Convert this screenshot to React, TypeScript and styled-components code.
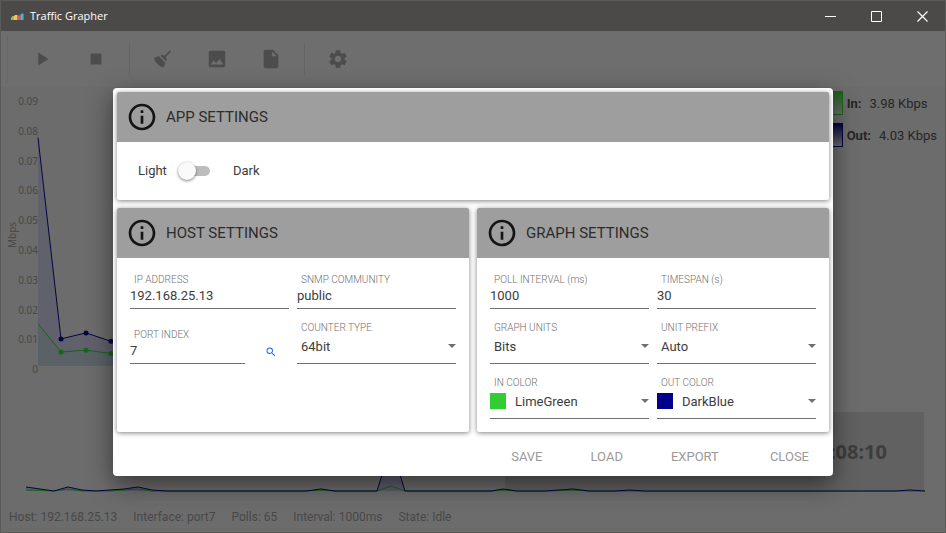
import React, { useState } from "react";
import styled, { createGlobalStyle } from "styled-components";
import { MdImage, MdInfoOutline, MdInsertDriveFile, MdPlayArrow, MdSearch, MdSettings, MdStop } from "react-icons/md";

const GlobalStyle = createGlobalStyle`
  *, *::before, *::after { box-sizing: border-box; }
  body { margin: 0; font-family: Roboto, sans-serif; font-size: 13px; color: #3c3c3c; }
  button, input, select { font: inherit; color: inherit; margin: 0; padding: 0; border: 0; border-radius: 0; background: none; }
`;

const systemFont = `"Noto Sans", sans-serif`;

const Window = styled.div`
  display: flex;
  flex-direction: column;
  min-height: 100vh;
  border: 1px solid #5a5a59;
  background: #6c6c6c;
`;

const TitleBar = styled.header`
  display: flex;
  align-items: center;
  height: 30px;
  padding-left: 9px;
  gap: 6px;
  background: #4c4a48;
  color: #fff;
`;

const Title = styled.h1`
  flex: 1;
  margin: 0;
  font: 400 11px/16px "Open Sans", sans-serif;
`;

const WindowControls = styled.div`
  display: flex;
  align-self: stretch;
`;

const WindowButton = styled.button`
  display: grid;
  place-items: center;
  width: 46px;
`;

const Content = styled.div`
  position: relative;
  flex: 1;
  display: flex;
  flex-direction: column;
`;

const Toolbar = styled.div`
  display: flex;
  align-items: center;
  height: 56px;
  padding-left: 6px;
  background: #6e6e6e;
`;

const Grip = styled.span`
  width: 8px;
  height: 46px;
  border-left: 1px dotted #626262;
`;

const ToolButton = styled.button`
  display: grid;
  place-items: center;
  width: 54px;
  height: 40px;
  color: #4c4c4c;
`;

const Divider = styled.span`
  width: 1px;
  height: 32px;
  margin: 0 6px;
  background: #646464;
`;

const Monitor = styled.main`
  flex: 1;
  display: flex;
`;

const TrafficChart = styled.svg`
  flex: 1;
  min-width: 0;
  height: 325px;
`;

const AxisText = styled.text`
  font: 400 10px ${systemFont};
  fill: #484848;
`;

const Legend = styled.ul`
  display: flex;
  flex-direction: column;
  gap: 8px;
  margin: 0;
  padding: 4px 8px 0 0;
  list-style: none;
  color: #262626;
`;

const LegendItem = styled.li`
  display: flex;
  align-items: center;
  height: 24px;
`;

const LegendSwatch = styled.span<{ $color: string }>`
  width: 24px;
  height: 24px;
  margin-right: 4px;
  border: 1px solid ${(p) => p.$color};
  background: linear-gradient(${(p) => p.$color}, #6c6c6c);
`;

const LegendValue = styled.span`
  margin-left: 8px;
`;

const OverviewChart = styled.svg`
  width: 100%;
  height: 92px;
`;

const ElapsedText = styled.text`
  font: 700 20px ${systemFont};
  fill: #3d3d3d;
`;

const StatusBar = styled.footer`
  display: flex;
  gap: 16px;
  padding: 5px 8px 7px;
  font-size: 12px;
  line-height: 16px;
  color: #484848;
`;

const Overlay = styled.div`
  position: absolute;
  inset: 0;
  display: grid;
  place-items: center;
`;

const Dialog = styled.form`
  width: min(720px, 100%);
  padding: 4px 4px 0;
  border-radius: 4px;
  background: #fff;
  box-shadow: 0 8px 24px rgba(0, 0, 0, 0.5);
`;

const Cards = styled.div`
  display: grid;
  grid-template-columns: 1fr 1fr;
  gap: 8px;
`;

const Card = styled.section<{ $wide?: boolean }>`
  grid-column: ${(p) => (p.$wide ? "1 / -1" : "auto")};
  border-radius: 2px;
  background: #fff;
  box-shadow: 0 1px 5px rgba(0, 0, 0, 0.5);
`;

const CardHeader = styled.h2`
  display: flex;
  align-items: center;
  gap: 8px;
  height: 50px;
  margin: 0;
  padding-left: 9px;
  border-radius: 2px 2px 0 0;
  background: #9e9e9e;
  color: #2c2c2c;
  font-size: 15px;
  font-weight: 400;

  svg { color: #141414; }
`;

const ThemeRow = styled.div`
  display: flex;
  align-items: center;
  height: 58px;
  padding-left: 21px;
`;

const Switch = styled.input`
  appearance: none;
  display: flex;
  align-items: center;
  width: 32px;
  height: 10px;
  margin: 0 23px 0 11px;
  border-radius: 5px;
  background: #bdbdbd;

  &::before {
    content: "";
    width: 18px;
    height: 18px;
    border-radius: 50%;
    background: #fafafa;
    box-shadow: 0 1px 3px rgba(0, 0, 0, 0.5);
  }
  &:checked { justify-content: flex-end; }
`;

const FieldGrid = styled.div`
  display: grid;
  grid-template-columns: 1fr 1fr;
  grid-template-rows: 51px 55px 55px;
  align-items: end;
  column-gap: 8px;
  padding: 0 13px 13px;
`;

const Field = styled.div`
  display: flex;
  flex-direction: column;
  flex: 1;
  min-width: 0;
`;

const FieldLabel = styled.label`
  padding-left: 4px;
  font-size: 10px;
  font-weight: 300;
  line-height: 12px;
  color: #707070;
`;

const TextInput = styled.input`
  width: 100%;
  height: 23px;
  padding-bottom: 2px;
  border-bottom: 1px solid #707070;
  outline: 0;
`;

const SelectBox = styled.div`
  display: flex;
  align-items: center;
  height: 30px;
  padding-bottom: 5px;
  border-bottom: 1px solid #707070;
`;

const ColorSwatch = styled.span<{ $color: string }>`
  width: 16px;
  height: 16px;
  margin-right: 5px;
  background: ${(p) => p.$color};
`;

const Select = styled.select`
  appearance: none;
  flex: 1;
  min-width: 0;
  height: 24px;
  padding: 2px 0 0 4px;
  outline: 0;
`;

const Arrow = styled.span`
  border: 4px solid transparent;
  border-top-color: #707070;
  border-bottom: 0;
  pointer-events: none;
`;

const PortRow = styled.div`
  display: flex;
  align-items: flex-end;
  gap: 8px;
`;

const SearchButton = styled.button`
  display: grid;
  place-items: center;
  width: 36px;
  height: 24px;
  color: #2962ff;
`;

const Actions = styled.div`
  display: flex;
  justify-content: flex-end;
  align-items: center;
  gap: 16px;
  height: 44px;
  padding: 6px 4px 0 0;
`;

const ActionButton = styled.button`
  height: 32px;
  padding: 0 16px;
  color: #9a9a9a;

  &:last-child { margin-left: 3px; }
`;

const IN = "#186418";
const OUT = "#050540";

type Point = [number, number];
const line = (points: Point[]) => points.map((p) => p.join(",")).join(" ");
const area = (points: Point[], base: number) =>
  line([[points[0][0], base], ...points, [points[points.length - 1][0], base]]);

const BASE = 279;
const PIXELS_PER_TICK = 30;
const ticks = ["0.09", "0.08", "0.07", "0.06", "0.05", "0.04", "0.03", "0.02", "0.01", "0"];
const plot = (values: number[]): Point[] => values.map((v, i) => [i === 0 ? 37 : 35 + i * 25, BASE - v * 2980]);
const outPoints = plot([0.0766, 0.0091, 0.0111, 0.0083, 0.009]);
const inPoints = plot([0.0142, 0.0047, 0.0053, 0.0042, 0.0045]);

const outOverview: Point[] = [
  [25, 75], [39, 77], [53, 79], [67, 75], [81, 78], [95, 79], [109, 78], [123, 77], [137, 75], [151, 78], [166, 79],
  [305, 79], [320, 77], [334, 79], [376, 79], [390, 34], [404, 79], [490, 79], [502, 77], [516, 79], [544, 79],
  [572, 77], [588, 79], [614, 79], [628, 78], [644, 79], [895, 79], [909, 78], [924, 79],
];
const inOverview: Point[] = [
  [25, 78], [53, 79], [67, 77], [81, 79], [109, 79], [137, 77], [151, 79], [305, 79], [320, 78], [334, 79],
  [376, 79], [390, 74], [404, 79], [490, 79], [502, 78], [516, 79], [544, 79], [572, 78], [588, 79], [924, 79],
];

function BroomIcon() {
  return (
    <svg width="22" height="22" viewBox="0 0 24 24" fill="currentColor">
      <path d="M19.36,2.72L20.78,4.14L15.06,9.85C16.13,11.39 16.28,13.24 15.38,14.44L9.06,8.12C10.26,7.22 12.11,7.37 13.65,8.44L19.36,2.72M5.93,17.57C3.92,15.56 2.69,13.16 2.35,10.92L7.23,8.83L14.67,16.27L12.58,21.15C10.34,20.81 7.94,19.58 5.93,17.57Z" />
    </svg>
  );
}

function AppLogo() {
  return (
    <svg width="14" height="14" viewBox="0 0 14 14">
      <path d="M1 11V8.500L2.500 7H4V11Z" fill="#8dbb6b" />
      <path d="M4 11V7L5 6H7.500V11Z" fill="#efc75e" />
      <path d="M7.500 11V6.500H10.500V11Z" fill="#e2574c" />
      <path d="M10.500 11V5.500L12 4.500H13.500V11Z" fill="#5fa8dc" />
    </svg>
  );
}

function TextField({ id, label, value }: { id: string; label: string; value: string }) {
  return (
    <Field>
      <FieldLabel htmlFor={id}>{label}</FieldLabel>
      <TextInput id={id} defaultValue={value} />
    </Field>
  );
}

function SelectField({ id, label, options, swatches }: { id: string; label: string; options: string[]; swatches?: boolean }) {
  const [value, setValue] = useState(options[0]);
  return (
    <Field>
      <FieldLabel htmlFor={id}>{label}</FieldLabel>
      <SelectBox>
        {swatches && <ColorSwatch $color={value.toLowerCase()} />}
        <Select id={id} value={value} onChange={(e) => setValue(e.target.value)}>
          {options.map((o) => (
            <option key={o}>{o}</option>
          ))}
        </Select>
        <Arrow />
      </SelectBox>
    </Field>
  );
}

function Chart() {
  return (
    <TrafficChart role="img" aria-label="Traffic in Mbps">
      {ticks.map((t, i) => (
        <AxisText key={t} x="37" y={18 + Math.round((i * PIXELS_PER_TICK * 149) / 150)} textAnchor="end">{t}</AxisText>
      ))}
      <AxisText transform="translate(15 148) rotate(-90)" textAnchor="middle">Mbps</AxisText>
      <polygon points={area(outPoints, BASE)} fill="#4c4c70" fillOpacity="0.35" />
      <polygon points={area(inPoints, BASE)} fill="#3f6b50" fillOpacity="0.2" />
      <polyline points={line(inPoints)} fill="none" stroke={IN} />
      <polyline points={line(outPoints)} fill="none" stroke={OUT} />
      {inPoints.slice(1).map(([x, y]) => <circle key={x} cx={x} cy={y} r="2.500" fill={IN} />)}
      {outPoints.slice(1).map(([x, y]) => <circle key={x} cx={x} cy={y} r="2.500" fill={OUT} />)}
    </TrafficChart>
  );
}

function Overview() {
  return (
    <OverviewChart role="img" aria-label="Traffic overview">
      <rect x="504" y="0" width="419" height="78" fill="#616161" />
      <ElapsedText x="886" y="47" textAnchor="end">00:08:10</ElapsedText>
      <polygon points={area(outOverview, 79)} fill="#4c4c70" fillOpacity="0.5" />
      <polyline points={line(inOverview)} fill="none" stroke={IN} />
      <polyline points={line(outOverview)} fill="none" stroke={OUT} />
    </OverviewChart>
  );
}

export default function App() {
  return (
    <>
      <GlobalStyle />
      <Window>
        <TitleBar>
          <AppLogo />
          <Title>Traffic Grapher</Title>
          <WindowControls>
            <WindowButton aria-label="Minimize">
              <svg width="11" height="11" stroke="#fff"><path d="M0 5.500H11" /></svg>
            </WindowButton>
            <WindowButton aria-label="Maximize">
              <svg width="11" height="11" stroke="#fff" fill="none"><path d="M0.500 0.500H10.500V10.500H0.500Z" /></svg>
            </WindowButton>
            <WindowButton aria-label="Close window">
              <svg width="11" height="11" stroke="#fff" strokeWidth="1.200"><path d="M0.500 0.500L10.500 10.500M10.500 0.500L0.500 10.500" /></svg>
            </WindowButton>
          </WindowControls>
        </TitleBar>
        <Content>
          <Toolbar>
            <Grip />
            <ToolButton aria-label="Start"><MdPlayArrow size={22} /></ToolButton>
            <ToolButton aria-label="Stop"><MdStop size={22} /></ToolButton>
            <Divider />
            <ToolButton aria-label="Clear"><BroomIcon /></ToolButton>
            <ToolButton aria-label="Save image"><MdImage size={22} /></ToolButton>
            <ToolButton aria-label="Save file"><MdInsertDriveFile size={22} /></ToolButton>
            <Divider />
            <ToolButton aria-label="Settings"><MdSettings size={22} /></ToolButton>
          </Toolbar>
          <Monitor>
            <Chart />
            <Legend>
              <LegendItem><LegendSwatch $color={IN} /><b>In:</b><LegendValue>3.98 Kbps</LegendValue></LegendItem>
              <LegendItem><LegendSwatch $color={OUT} /><b>Out:</b><LegendValue>4.03 Kbps</LegendValue></LegendItem>
            </Legend>
          </Monitor>
          <Overview />
          <StatusBar>
            <span>Host: 192.168.25.13</span>
            <span>Interface: port7</span>
            <span>Polls: 65</span>
            <span>Interval: 1000ms</span>
            <span>State: Idle</span>
          </StatusBar>
          <Overlay>
            <Dialog role="dialog" aria-label="Settings" onSubmit={(e) => e.preventDefault()}>
              <Cards>
                <Card $wide>
                  <CardHeader><MdInfoOutline size={32} />APP SETTINGS</CardHeader>
                  <ThemeRow>
                    <span>Light</span>
                    <Switch id="theme" type="checkbox" role="switch" aria-label="Dark theme" />
                    <label htmlFor="theme">Dark</label>
                  </ThemeRow>
                </Card>
                <Card>
                  <CardHeader><MdInfoOutline size={32} />HOST SETTINGS</CardHeader>
                  <FieldGrid>
                    <TextField id="ip" label="IP ADDRESS" value="192.168.25.13" />
                    <TextField id="community" label="SNMP COMMUNITY" value="public" />
                    <PortRow>
                      <TextField id="port" label="PORT INDEX" value="7" />
                      <SearchButton type="button" aria-label="Find port"><MdSearch size={12} /></SearchButton>
                    </PortRow>
                    <SelectField id="counter" label="COUNTER TYPE" options={["64bit", "32bit"]} />
                  </FieldGrid>
                </Card>
                <Card>
                  <CardHeader><MdInfoOutline size={32} />GRAPH SETTINGS</CardHeader>
                  <FieldGrid>
                    <TextField id="poll" label="POLL INTERVAL (ms)" value="1000" />
                    <TextField id="timespan" label="TIMESPAN (s)" value="30" />
                    <SelectField id="units" label="GRAPH UNITS" options={["Bits", "Bytes"]} />
                    <SelectField id="prefix" label="UNIT PREFIX" options={["Auto", "Kilo", "Mega"]} />
                    <SelectField id="inColor" label="IN COLOR" options={["LimeGreen", "DarkBlue"]} swatches />
                    <SelectField id="outColor" label="OUT COLOR" options={["DarkBlue", "LimeGreen"]} swatches />
                  </FieldGrid>
                </Card>
              </Cards>
              <Actions>
                <ActionButton type="submit">SAVE</ActionButton>
                <ActionButton type="button">LOAD</ActionButton>
                <ActionButton type="button">EXPORT</ActionButton>
                <ActionButton type="button">CLOSE</ActionButton>
              </Actions>
            </Dialog>
          </Overlay>
        </Content>
      </Window>
    </>
  );
}
